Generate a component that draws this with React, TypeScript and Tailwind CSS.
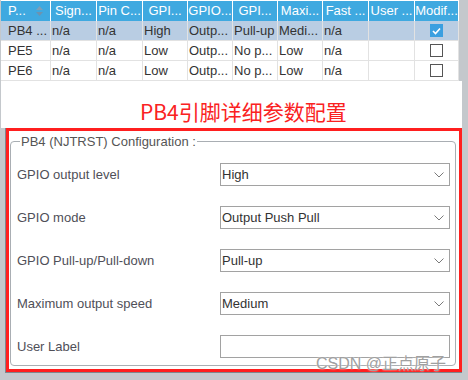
import React from 'react';

const cols = [50, 46, 46, 45, 45, 45, 45, 46, 46, 44];
const headers = ['P...', 'Sign...', 'Pin C...', 'GPI...', 'GPIO...', 'GPI...', 'Maxi...', 'Fast ...', 'User ...', 'Modif...'];

const rows = [
  { cells: ['PB4 ...', 'n/a', 'n/a', 'High', 'Outp...', 'Pull-up', 'Medi...', 'n/a', ''], checked: true, selected: true },
  { cells: ['PE5', 'n/a', 'n/a', 'Low', 'Outp...', 'No p...', 'Low', 'n/a', ''], checked: false, selected: false },
  { cells: ['PE6', 'n/a', 'n/a', 'Low', 'Outp...', 'No p...', 'Low', 'n/a', ''], checked: false, selected: false },
];

const fields = [
  { label: 'GPIO output level', value: 'High', select: true },
  { label: 'GPIO mode', value: 'Output Push Pull', select: true },
  { label: 'GPIO Pull-up/Pull-down', value: 'Pull-up', select: true },
  { label: 'Maximum output speed', value: 'Medium', select: true },
  { label: 'User Label', value: '', select: false },
];

function SortIcon() {
  return (
    <svg width="9" height="12" viewBox="0 0 9 12" className="ml-[9px]">
      <path d="M4.5 1 L8 5 L1 5 Z" fill="#7d9fb8" />
      <path d="M1 7 L8 7 L4.5 11 Z" fill="#6d93b0" />
    </svg>
  );
}

function Checkbox({ checked }: { checked: boolean }) {
  if (checked) {
    return (
      <div className="w-[13px] h-[13px] bg-[#3a9fe0] flex items-center justify-center">
        <svg width="9" height="8" viewBox="0 0 9 8">
          <path d="M1 4 L3.5 6.5 L8 1.5" stroke="white" strokeWidth="1.6" fill="none" />
        </svg>
      </div>
    );
  }
  return <div className="w-[13px] h-[13px] bg-white border border-[#555]" />;
}

function Chevron() {
  return (
    <svg width="10" height="6" viewBox="0 0 10 6">
      <path d="M0.5 0.5 L5 5 L9.5 0.5" stroke="#7a7a7a" strokeWidth="1" fill="none" />
    </svg>
  );
}

export default function App() {
  return (
    <div className="w-[468px] h-[380px] bg-[#c4c8cc] overflow-hidden flex flex-col font-['Liberation_Sans',Arial,sans-serif]">
      {/* pin table + annotation title */}
      <div className="ml-[1px] w-[461px] bg-white">
        <div className="flex">
          <div className="w-[458px]">
            <div className="flex h-[20px] mt-[1px] bg-[#3fa9e0] text-white text-[13px]">
              {headers.map((h, i) => (
                <div
                  key={i}
                  style={{ width: cols[i] }}
                  className={`flex items-center border-r border-white overflow-hidden whitespace-nowrap ${i === 0 ? 'pl-[7px]' : 'justify-center'}`}
                >
                  {h}
                  {i === 0 && <SortIcon />}
                </div>
              ))}
            </div>
            {rows.map((r, ri) => (
              <div
                key={ri}
                className={`flex h-[20px] border-b border-[#e2e2e2] text-[13px] text-[#333] ${r.selected ? 'bg-[#b9cde3]' : 'bg-white'}`}
              >
                {r.cells.map((c, ci) => (
                  <div
                    key={ci}
                    style={{ width: cols[ci] }}
                    className={`flex items-center border-r border-[#e2e2e2] overflow-hidden whitespace-nowrap ${ci === 0 ? 'pl-[7px]' : 'pl-[1px]'}`}
                  >
                    {c}
                  </div>
                ))}
                <div style={{ width: cols[9] }} className="flex items-center justify-center border-r border-[#e2e2e2]">
                  <Checkbox checked={r.checked} />
                </div>
              </div>
            ))}
          </div>
          <div className="w-[3px] bg-[#c4c8cc]" />
        </div>
        <div className="h-[47px] pt-[15px] pl-[139px]">
          <div className="h-[30px] leading-[30px] text-[21px] font-normal text-[#fa2222] whitespace-nowrap font-['Noto_Sans_CJK_SC',sans-serif]">
            PB4引脚详细参数配置
          </div>
        </div>
      </div>

      {/* configuration panel */}
      <div className="relative ml-[5px] w-[457px] border-l border-b border-[#80868c]">
        <div className="w-[456px] h-[244px] border-[3px] border-[#ff1f1f] bg-white pt-[3px] pl-[1px] pr-[3px]">
          <fieldset className="border border-[#a9aeb3] rounded-[4px] pl-[6px] pr-[5px] pt-[14px] pb-[7px]">
            <legend className="ml-[3px] px-[1px] text-[13px] leading-[15px] text-[#555]">PB4 (NJTRST) Configuration :</legend>
            <div className="flex flex-col gap-[20px]">
              {fields.map((f, i) => (
                <div key={i} className="flex items-center h-[23px]">
                  <div className="w-[203px] text-[13px] text-[#4f4f58]">{f.label}</div>
                  <div className="w-[230px] h-[23px] border border-[#a2a2a2] flex items-center justify-between pl-[1px] pr-[5px] text-[13px] text-[#333]">
                    <span>{f.value}</span>
                    {f.select && <Chevron />}
                  </div>
                </div>
              ))}
            </div>
          </fieldset>
        </div>
        <div className="absolute left-[310px] top-[224px] text-[16px] text-[#a0a0a0] whitespace-nowrap [text-shadow:0_0_2px_white] font-['Liberation_Sans','Noto_Sans_CJK_SC',sans-serif]">
          CSDN @正点原子
        </div>
      </div>
    </div>
  );
}
